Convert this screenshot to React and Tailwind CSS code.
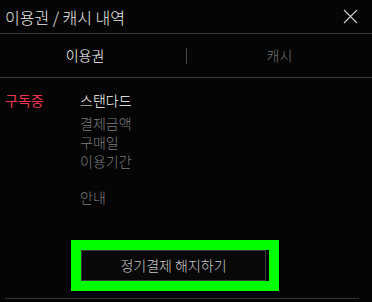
import React from 'react';

const rows = ["결제금액", "구매일", "이용기간"];

export default function App() {
  return (
    <div
      className="w-[372px] h-[302px] bg-[#050505] text-white overflow-hidden flex flex-col font-light"
      style={{ fontFamily: '"Noto Sans CJK KR", "Noto Sans", sans-serif' }}
    >
      {/* header */}
      <div className="h-[34px] flex items-center justify-between pl-[5px] pr-[14px] border-b border-[#3c3c3c]">
        <span className="text-[16px] leading-none text-[#e8e8e8]">이용권 / 캐시 내역</span>
        <svg width="15" height="15" viewBox="0 0 15 15" className="text-[#cfcfcf]">
          <path d="M1 1L14 14M14 1L1 14" stroke="currentColor" strokeWidth="1.1" fill="none" />
        </svg>
      </div>

      {/* tabs */}
      <div className="h-[44px] flex items-center border-b border-[#3c3c3c]">
        <div className="w-[186px] text-center text-[14px] text-white pr-[16px]">이용권</div>
        <div className="w-px h-[16px] bg-[#444]" />
        <div className="flex-1 text-center text-[14px] text-[#6f6f6f]">캐시</div>
      </div>

      {/* content */}
      <div className="flex pt-[13px] pl-[5px]">
        <div className="w-[75px] text-[14px] leading-[19px] text-[#ec3450] font-normal">구독중</div>
        <div className="flex flex-col text-[14px] leading-[19px]">
          <span className="text-white mb-[4px]">스탠다드</span>
          {rows.map((r) => (
            <span key={r} className="text-[#7c7c7c]">{r}</span>
          ))}
          <span className="text-[#7c7c7c] mt-[17px]">안내</span>
        </div>
      </div>

      {/* button */}
      <div className="flex mt-[33px] pl-[71px]">
        <div className="border-[10px] border-[#00ff00] pr-[3px]">
          <button className="w-[185px] h-[31px] border border-[#3a3a3a] bg-[#080808] text-[14px] text-[#c8c8c8]">
            정기결제 해지하기
          </button>
        </div>
      </div>

      <div className="mt-auto mb-[3px] mx-[5px] w-[354px] h-px bg-[#333]" />
    </div>
  );
}
